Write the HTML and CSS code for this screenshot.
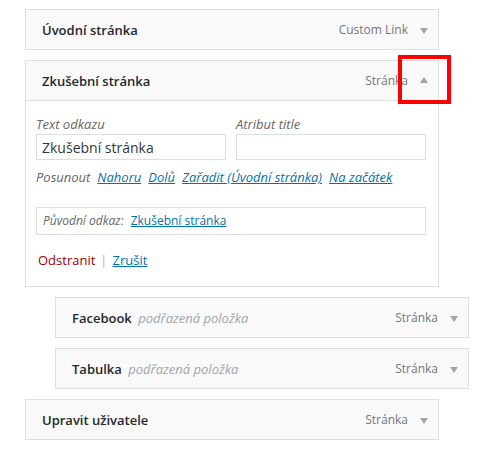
FILE: index.html
```html
<!DOCTYPE html>
<html lang="cs">
<head>
<meta charset="utf-8">
<link rel="stylesheet" href="styles.css">
</head>
<body>
<ul class="menu">
  <li class="item">
    <div class="handle">
      <span class="title">Úvodní stránka</span>
      <span class="controls"><span class="type">Custom Link</span><span class="arrow down"></span></span>
    </div>
  </li>
  <li class="item open">
    <div class="handle">
      <span class="title">Zkušební stránka</span>
      <span class="controls"><span class="type">Stránka</span><span class="arrow up"></span></span>
      <span class="highlight"></span>
    </div>
    <div class="settings">
      <div class="fields">
        <label class="field">
          <span class="label">Text odkazu</span>
          <input class="input" type="text" value="Zkušební stránka">
        </label>
        <label class="field">
          <span class="label">Atribut title</span>
          <input class="input" type="text" value="">
        </label>
      </div>
      <div class="move">
        <span class="move-label">Posunout</span>
        <a href="#" class="link">Nahoru</a>
        <a href="#" class="link">Dolů</a>
        <a href="#" class="link">Zařadit (Úvodní stránka)</a>
        <a href="#" class="link">Na začátek</a>
      </div>
      <div class="original">
        <span class="orig-label">Původní odkaz:</span>
        <a href="#" class="orig-link">Zkušební stránka</a>
      </div>
      <div class="actions">
        <a href="#" class="delete">Odstranit</a><span class="sep">|</span><a href="#" class="cancel">Zrušit</a>
      </div>
    </div>
  </li>
  <li class="item depth1">
    <div class="handle">
      <span class="title">Facebook <span class="sub">podřazená položka</span></span>
      <span class="controls"><span class="type">Stránka</span><span class="arrow down"></span></span>
    </div>
  </li>
  <li class="item depth1">
    <div class="handle">
      <span class="title">Tabulka <span class="sub">podřazená položka</span></span>
      <span class="controls"><span class="type">Stránka</span><span class="arrow down"></span></span>
    </div>
  </li>
  <li class="item">
    <div class="handle">
      <span class="title">Upravit uživatele</span>
      <span class="controls"><span class="type">Stránka</span><span class="arrow down"></span></span>
    </div>
  </li>
</ul>
</body>
</html>
```
FILE: styles.css
```css
html, body {
  margin: 0;
  padding: 0;
  background: #ffffff;
}
body {
  font-family: "Open Sans", "DejaVu Sans", sans-serif;
  font-size: 13px;
  color: #23282d;
}
.menu {
  list-style: none;
  margin: 0;
  padding: 9px 0 0 25px;
  display: flex;
  flex-direction: column;
  gap: 10px;
}
.item {
  width: 414px;
  position: relative;
}
.item.depth1 {
  margin-left: 30px;
}
.handle {
  position: relative;
  box-sizing: border-box;
  height: 41px;
  border: 1px solid #dfdfdf;
  background: #f9f9f9;
  display: flex;
  align-items: center;
  justify-content: space-between;
  padding: 0 10px 0 16px;
}
.title {
  font-weight: 600;
  font-size: 13px;
  color: #23282d;
  white-space: nowrap;
}
.sub {
  font-weight: 400;
  font-style: italic;
  color: #a0a5aa;
  margin-left: 3px;
}
.controls {
  display: flex;
  align-items: center;
  gap: 12px;
}
.type {
  color: #72777c;
  font-size: 12px;
}
.arrow {
  width: 0;
  height: 0;
  border-left: 4px solid transparent;
  border-right: 4px solid transparent;
}
.arrow.down {
  border-top: 6px solid #a0a5aa;
  margin-top: 2px;
}
.arrow.up {
  border-bottom: 6px solid #a0a5aa;
  margin-bottom: 1px;
}
.highlight {
  position: absolute;
  left: 372px;
  top: -6px;
  width: 45px;
  height: 41px;
  border: 4px solid #ff0000;
}
.settings {
  box-sizing: border-box;
  border: 1px solid #dfdfdf;
  border-top: none;
  background: #ffffff;
  padding: 14px 10px 16px 10px;
}
.fields {
  display: flex;
  gap: 10px;
}
.field {
  display: flex;
  flex-direction: column;
  width: 190px;
}
.label {
  font-style: italic;
  color: #666666;
  line-height: 19px;
}
.input {
  box-sizing: border-box;
  width: 190px;
  height: 26px;
  margin: 0;
  border: 1px solid #dddddd;
  padding: 0 5px;
  font-family: "Open Sans", "DejaVu Sans", sans-serif;
  font-size: 14px;
  color: #32373c;
  background: #ffffff;
  outline: none;
}
.move {
  margin-top: 7px;
  line-height: 20px;
  font-style: italic;
  color: #666666;
  display: flex;
  gap: 7px;
}
.link {
  color: #0073aa;
  text-decoration: underline;
}
.original {
  box-sizing: border-box;
  margin-top: 20px;
  width: 390px;
  height: 28px;
  border: 1px solid #dddddd;
  padding: 3px 6px;
  font-size: 12px;
  line-height: 20px;
  display: flex;
  gap: 7px;
}
.orig-label {
  font-style: italic;
  color: #666666;
}
.orig-link {
  color: #0073aa;
  text-decoration: underline;
}
.actions {
  margin-top: 15px;
  line-height: 20px;
  padding-left: 2px;
  display: flex;
}
.delete {
  color: #a00000;
  text-decoration: none;
}
.sep {
  color: #e8b060;
  margin: 0 5px 0 5px;
}
.cancel {
  color: #0073aa;
  text-decoration: underline;
}
```
